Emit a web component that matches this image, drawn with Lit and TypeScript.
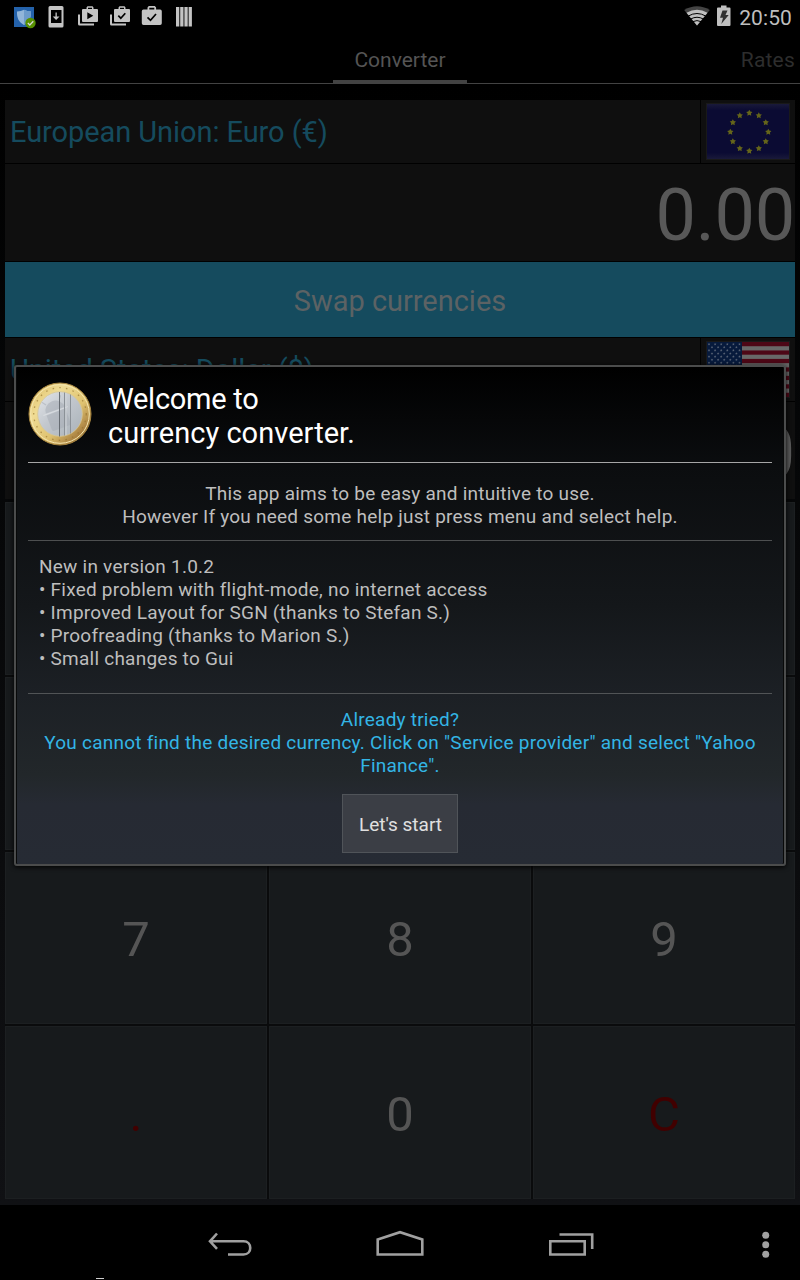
import { LitElement, html, css, svg } from "lit";
import { customElement, property } from "lit/decorators.js";

const star = (cx: number, cy: number, r: number) => {
  const pts: string[] = [];
  for (let i = 0; i < 10; i++) {
    const a = (Math.PI * i) / 5 - Math.PI / 2;
    const q = i % 2 ? r * 0.52 : r;
    pts.push(`${(cx + q * Math.cos(a)).toFixed(2)},${(cy + q * Math.sin(a)).toFixed(2)}`);
  }
  return svg`<polygon points=${pts.join(" ")}></polygon>`;
};

@customElement("status-bar")
class StatusBar extends LitElement {
  static styles = css`
    :host { display: flex; height: 34px; justify-content: space-between; color: #bebebe; }
    .left, .right { display: block; flex: none; }
    .clock { font-size: 21px; line-height: 36px; letter-spacing: 0.1px; padding-right: 8px; }
    .end { display: flex; gap: 7px; }
  `;
  render() {
    return html`
      <svg class="left" width="200" height="34" viewBox="0 0 200 34" fill="#c4c4c4">
        <rect x="14" y="7" width="20" height="20" fill="#2462ab"></rect>
        <path d="M17 11.5q4 0 7-1.8q3 1.8 7 1.8c.3 6-1.5 10.500-7 13.500c-5.500-3-7.300-7.500-7-13.500z" fill="#92b5d9"></path>
        <path d="M24 9.700q3 1.800 7 1.800c.3 6-1.500 10.500-7 13.500z" fill="#6d9bcb"></path>
        <circle cx="30.500" cy="23" r="5.200" fill="#569000"></circle>
        <path d="M27.800 23l2 2l3.500-3.700" fill="none" stroke="#d5d5d5" stroke-width="1.300"></path>
        <path fill-rule="evenodd" d="M50 6h12q1.500 0 1.500 1.500v18.500q0 1.500-1.500 1.500h-12q-1.500 0-1.500-1.500v-18.500q0-1.500 1.500-1.500zM51 10v13h10.500v-13z"></path>
        <path d="M55.500 12.500h1.300v4h2.700l-3.400 3.400l-3.400-3.400h2.800z"></path>
        <path d="M78 14.500h2v9h14v2h-14.500q-1.500 0-1.500-1.500zM110 14.500h2v9h14v2h-14.500q-1.500 0-1.500-1.500z"></path>
        <g fill-rule="evenodd">
          <path d="M83 9h3.500v-1.500l1-1.300h5l1 1.300v1.500h3.500q1 0 1 1v11q0 1-1 1h-14q-1 0-1-1v-11q0-1 1-1zM88 7.800v1.200h4v-1.200zM87.300 12.300v7l6-3.500z"></path>
          <path d="M115 9h3.500v-1.500l1-1.300h5l1 1.300v1.500h3.500q1 0 1 1v11q0 1-1 1h-14q-1 0-1-1v-11q0-1 1-1zM120 7.800v1.200h4v-1.200z"></path>
          <path d="M143.500 9.500h4v-2l1.300-1.500h6l1.300 1.500v2h4q1.700 0 1.700 1.700v12.100q0 1.700-1.700 1.700h-16.600q-1.700 0-1.700-1.700v-12.100q0-1.700 1.700-1.700zM149.300 7.800v1.700h5v-1.700z"></path>
        </g>
        <path d="M118.300 15.700l2.500 2.500l4.500-5M147.500 17.300l3 3l5.500-6.300" fill="none" stroke="#000" stroke-width="1.700"></path>
        <path d="M176 7h3.300v19.500h-3.300zM180.200 7h3.300v19.500h-3.300zM184.400 7h3.300v19.500h-3.300zM188.600 7h3.300v19.500h-3.300z"></path>
      </svg>
      <div class="end">
        <svg class="right" width="50" height="34" viewBox="682 0 50 34" fill="#c0c0c0">
          <path d="M697 25.500l-12.800-15.500q12.800-7.500 25.600 0z" fill="#444"></path>
          <path d="M697 25.500l-10.500-12.700q10.500-6 21 0z"></path>
          <path d="M688.300 16q8.700-5 17.400 0M690.700 19q6.300-3.500 12.600 0M693 21.600q4-2 8 0" fill="none" stroke="#000" stroke-width="1"></path>
          <path d="M718 7.500h3v-2h5.500v2h3q1 0 1 1v16.500q0 1-1 1h-11.500q-1 0-1-1v-16.500q0-1 1-1z"></path>
          <path d="M722.500 10.500h5l-2 4.500h3.200l-7.400 9l1.700-6.200h-3z" fill="#0a0a0a" opacity=".8"></path>
        </svg>
        <span class="clock">20:50</span>
      </div>
    `;
  }
}

@customElement("currency-row")
class CurrencyRow extends LitElement {
  @property() label = "";
  @property() flag = "";
  static styles = css`
    :host { display: flex; height: 63px; gap: 1px; }
    .name { flex: 1; background: #0f0f0f; color: #154b5e; font-size: 29px; line-height: 64px; padding-left: 5px; letter-spacing: -0.07px; white-space: nowrap; }
    .flag { width: 94px; background: #0f0f0f; padding: 3px 0 0 5px; box-sizing: border-box; }
    svg { display: block; }
  `;
  eu() {
    return svg`
      <defs><linearGradient id="g" x1="0" y1="0" x2="0" y2="1">
        <stop offset="0" stop-color="#1b1b3a"></stop><stop offset=".12" stop-color="#0b0b33"></stop>
        <stop offset=".88" stop-color="#0b0b33"></stop><stop offset="1" stop-color="#1b1b3a"></stop>
      </linearGradient></defs>
      <rect x=".5" y=".5" width="83" height="56" fill="url(#g)" stroke="#191919"></rect>
      <g fill="#65651a">${Array.from({ length: 12 }, (_, i) =>
        star(43.3 + 19 * Math.sin((i * Math.PI) / 6), 29 - 19 * Math.cos((i * Math.PI) / 6), 3.3))}</g>`;
  }
  us() {
    return svg`
      <rect width="84" height="57" fill="#191919"></rect>
      <rect x="1" y="1" width="82" height="55" fill="#686868"></rect>
      ${Array.from({ length: 7 }, (_, i) => svg`<rect x="1" y=${1 + i * 8.46} width="82" height="4.23" fill="#4d0716"></rect>`)}
      <rect x="1" y="1" width="35" height="29.600" fill="#071a3c"></rect>
      <g fill="#566174">${Array.from({ length: 9 }, (_, r) =>
        Array.from({ length: r % 2 ? 5 : 6 }, (_, c) => star(3 + (r % 2 ? 3 : 0) + c * 6.1, 3.2 + r * 3.1, 1.3)))}</g>`;
  }
  render() {
    return html`<div class="name">${this.label}</div>
      <div class="flag"><svg width="85" height="57" viewBox="0 0 85 57">${this.flag === "eu" ? this.eu() : this.us()}</svg></div>`;
  }
}

@customElement("euro-coin")
class EuroCoin extends LitElement {
  static styles = css`:host { display: block; width: 64px; height: 64px; } svg { display: block; }`;
  render() {
    return html`<svg width="64" height="64" viewBox="0 0 64 64">
      <defs>
        <linearGradient id="gold" x1="0" y1="0" x2="1" y2="1">
          <stop offset="0" stop-color="#d9b960"></stop><stop offset=".3" stop-color="#f0dc94"></stop>
          <stop offset=".6" stop-color="#dfc270"></stop><stop offset=".82" stop-color="#a98040"></stop><stop offset="1" stop-color="#ead08a"></stop>
        </linearGradient>
        <linearGradient id="silver" x1="0" y1="0" x2="1" y2="1">
          <stop offset="0" stop-color="#e2e5e9"></stop><stop offset=".45" stop-color="#c3c8ce"></stop><stop offset="1" stop-color="#a9b1b8"></stop>
        </linearGradient>
      </defs>
      <circle cx="32" cy="32" r="31" fill="url(#gold)" stroke="#a5843f" stroke-width="1"></circle>
      <circle cx="32" cy="32" r="29.300" fill="none" stroke="#f5e6ae" stroke-width="1"></circle>
      <circle cx="32" cy="32" r="26.300" fill="none" stroke="#94722c" stroke-width="1.300" stroke-dasharray="1.500 5.300" opacity=".65"></circle>
      <circle cx="32" cy="32" r="22.300" fill="url(#silver)" stroke="#d6c798" stroke-width=".8"></circle>
      <g fill="#a6acb5" opacity=".5" transform="rotate(-20 28 30)">
        <path d="M18 28a10 9.500 0 0 1 20 0zM18 30h20v15q0 2-2 2h-16q-2 0-2-2z"></path>
        <path d="M21 20l-3-4M35 20l3-4" stroke="#a3a9b2" stroke-width="1"></path>
        <path d="M15 29h26" stroke="#eceef1" stroke-width="1"></path>
      </g>
      <path d="M31.500 10v44.500" stroke="#666c72" stroke-width="1"></path>
      <path d="M36.500 10.500v43M42.500 12.500v39" stroke="#8b9197" stroke-width="1"></path>
      <path d="M38 11v42" stroke="#d0d4d8" stroke-width="1"></path>
    </svg>`;
  }
}

@customElement("welcome-dialog")
class WelcomeDialog extends LitElement {
  static styles = css`
    :host { position: absolute; left: 14px; top: 365px; width: 772px; height: 501px; box-sizing: border-box;
      border: 2px solid #4b4c4c; border-radius: 3px; padding: 0 12px; box-shadow: 0 1px 5px #000, inset 1px 0 #080909, inset -1px 0 #080909;
      background: linear-gradient(#000 0, #0b0d0f 20%, #14171a 48%, #1c2025 66%, #22272a 82%, #262a33 88%, #262b34 100%);
      display: flex; flex-direction: column; color: #bebebe; font-size: 19px; line-height: 23px; letter-spacing: 0.235px; }
    .head { display: flex; flex: none; height: 96px; box-sizing: border-box; padding-top: 15px; gap: 16px; border-bottom: 1px solid #a6a6a6; }
    .title { color: #fff; font-size: 29px; line-height: 34px; letter-spacing: 0.04px; }
    .first { letter-spacing: -0.28px; }
    .intro { height: 78px; box-sizing: border-box; padding-top: 19px; text-align: center; border-bottom: 1px solid #4d4f50; }
    .news { height: 153px; box-sizing: border-box; padding: 14px 0 0 11px; border-bottom: 1px solid #515456; }
    .hint { padding-top: 14px; text-align: center; color: #33b5e5; }
    .go { flex: none; align-self: center; margin-top: 17px; width: 116px; height: 59px; border: 1px solid #505459; background: #3b3e45;
      color: #e0e0e0; font: inherit; letter-spacing: 0; padding: 2px 0 0 1px; border-radius: 0; white-space: nowrap; }
    .line { white-space: nowrap; }
  `;
  render() {
    const news = ["New in version 1.0.2", "• Fixed problem with flight-mode, no internet access",
      "• Improved Layout for SGN (thanks to Stefan S.)", "• Proofreading (thanks to Marion S.)", "• Small changes to Gui"];
    return html`
      <div class="head"><euro-coin></euro-coin><div class="title"><div class="first">Welcome to</div><div>currency converter.</div></div></div>
      <div class="intro">
        <div class="line">This app aims to be easy and intuitive to use.</div>
        <div class="line">However If you need some help just press menu and select help.</div>
      </div>
      <div class="news">${news.map((t) => html`<div class="line">${t}</div>`)}</div>
      <div class="hint">
        <div class="line">Already tried?</div>
        <div class="line">You cannot find the desired currency. Click on "Service provider" and select "Yahoo</div>
        <div class="line">Finance".</div>
      </div>
      <button class="go">Let's start</button>`;
  }
}

@customElement("app-root")
class AppRoot extends LitElement {
  static styles = css`
    :host { display: flex; flex-direction: column; position: relative; width: 800px; height: 1280px; overflow: hidden;
      background: #000; font-family: Roboto, "Noto Sans", sans-serif; }
    .tabs { height: 50px; box-sizing: border-box; display: grid; grid-template-columns: 333px 134px 1fr; border-bottom: 1px solid #434343;
      font-size: 21px; line-height: 52px; letter-spacing: 0; color: #2d2d2d; }
    .tab { height: 49px; box-sizing: border-box; }
    .on { grid-column: 2; height: 50px; text-align: center; color: #545454; border-bottom: 4px solid #434343; }
    .rates { text-align: right; padding-right: 5px; letter-spacing: 0.2px; }
    .main { height: 1121px; box-sizing: border-box; padding: 16px 5px 5px; display: flex; flex-direction: column;
      background: linear-gradient(#000, #050607 30%, #0b0c0e 70%, #101114); }
    .panel { display: flex; flex-direction: column; gap: 1px; background: #000; }
    .amount { height: 97px; background: #0f0f0f; color: #585858; text-align: right; font-size: 72px; line-height: 103px; letter-spacing: -0.2px; }
    .swap { height: 75px; background: #154b5e; color: #5c6264; text-align: center; font-size: 29px; line-height: 78px; letter-spacing: -0.03px; }
    .pad { margin-top: 3px; height: 697px; display: grid; grid-template-columns: repeat(3, 1fr); grid-template-rows: repeat(4, 1fr); gap: 2px; background: #0a0b0c; }
    .key { background: #171a1c; border: 1px solid #1c1f21; color: #555; font-size: 49px; display: flex; align-items: center; justify-content: center; padding-top: 3px; }
    .red { color: #410000; }
    .nav { height: 75px; }
    .nav svg { display: block; }
  `;
  render() {
    return html`
      <status-bar></status-bar>
      <div class="tabs"><div class="tab on">Converter</div><div class="tab rates">Rates</div></div>
      <div class="main">
        <div class="panel">
          <currency-row label="European Union: Euro (€)" flag="eu"></currency-row>
          <div class="amount">0.00</div>
          <div class="swap">Swap currencies</div>
          <currency-row label="United States: Dollar ($)" flag="us"></currency-row>
          <div class="amount">0.00</div>
        </div>
        <div class="pad">${["", "", "", "", "", "", "7", "8", "9", ".", "0", "C"].map(
          (k) => html`<div class="key ${k === "." || k === "C" ? "red" : ""}">${k}</div>`)}</div>
      </div>
      <div class="nav">
        <svg width="800" height="75" viewBox="0 1205 800 75" fill="none" stroke="#a0a0a0" stroke-width="2.600">
          <path d="M211 1241.300h32.500c9 0 9 13.200 0 13.200h-15.500M217 1233.500l-7 7.800l7 7.500"></path>
          <path d="M377.700 1239.500l22.300-7.300l22.300 7.300v15h-44.600z"></path>
          <path d="M550.300 1241.300h34.400v13.200h-34.400zM559.500 1234.500h32.700v14.500"></path>
          <g fill="#a0a0a0" stroke="none"><circle cx="765.700" cy="1235.300" r="3.500"></circle><circle cx="765.700" cy="1244.800" r="3.500"></circle><circle cx="765.700" cy="1254.200" r="3.500"></circle></g>
          <path d="M96 1278.500h8" stroke="#d0d0d0" stroke-width="1"></path>
        </svg>
      </div>
      <welcome-dialog></welcome-dialog>`;
  }
}
